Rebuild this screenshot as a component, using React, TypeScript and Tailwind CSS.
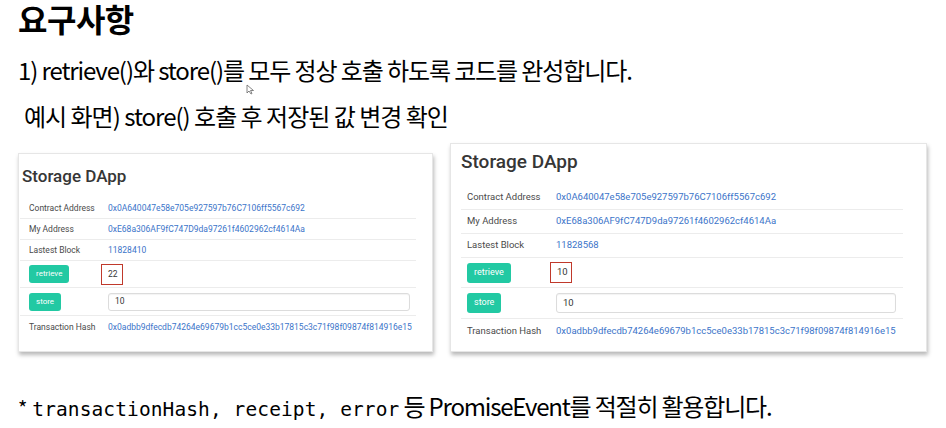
import React from "react";

type CardProps = {
  small?: boolean;
  block: string;
  retrieved: string;
};

const rows = {
  contract: "0x0A640047e58e705e927597b76C7106ff5567c692",
  me: "0xE68a306AF9fC747D9da97261f4602962cf4614Aa",
  tx: "0x0adbb9dfecdb74264e69679b1cc5ce0e33b17815c3c71f98f09874f814916e15",
};

function StorageCard({ small, block, retrieved }: CardProps) {
  // two sizes of the same dapp screenshot, left one is a bit smaller
  const card = small
    ? "w-[415px] h-[199px] mt-[10px] pt-[12px] pb-[15px]"
    : "w-[477px] h-[209px] ml-[17px] pt-[7px] pb-[9px]";
  const title = small
    ? "text-[17px] leading-[20px] pl-[3px] mb-[12px]"
    : "text-[19px] leading-[22px] pl-[10px] mb-[13px]";
  const table = small ? "ml-[1px] mr-[16px] text-[8.5px]" : "ml-[10px] mr-[23px] text-[9.5px]";
  const label = small ? "w-[88px] pl-[9px]" : "w-[95px] pl-[6px]";
  const h1 = small ? "h-[21px]" : "h-[24px]";
  const h4 = small ? "h-[27px]" : "h-[30px]";
  const h5 = small ? "h-[28px]" : "h-[31px]";
  const h6 = small ? "h-[22px]" : "h-[25px]";
  const btn = small ? "h-[18px] px-[7px] text-[8px]" : "h-[20px] px-[7px] text-[9px]";
  const box = small ? "h-[21px] w-[22px] -ml-[7px] pl-[6px]" : "h-[21px] w-[22px] -ml-[6px] pl-[6px]";
  const input = small ? "h-[18px] pl-[6px] mr-[6px]" : "h-[20px] pl-[6px] mr-[7px]";

  return (
    <div
      className={`${card} bg-white border border-[#e6e6e6] shadow-[1px_3px_4px_rgba(0,0,0,0.28)] shrink-0`}
      style={{ fontFamily: "Roboto, 'Liberation Sans', sans-serif" }}
    >
      <div className={`${title} font-medium text-[#363636]`}>Storage DApp</div>
      <div className={`${table} text-[#4a4a4a]`}>
        <div className={`${h1} flex items-center border-b border-[#ececec]`}>
          <div className={label}>Contract Address</div>
          <div className="text-[#3b74c9]">{rows.contract}</div>
        </div>
        <div className={`${h1} flex items-center border-b border-[#ececec]`}>
          <div className={label}>My Address</div>
          <div className="text-[#3b74c9]">{rows.me}</div>
        </div>
        <div className={`${h1} flex items-center border-b border-[#ececec]`}>
          <div className={label}>Lastest Block</div>
          <div className="text-[#3b74c9]">{block}</div>
        </div>
        <div className={`${h4} flex items-center border-b border-[#ececec]`}>
          <div className={`${label} flex`}>
            <span className={`${btn} flex items-center rounded-[3px] bg-[#22c9a3] text-white`}>retrieve</span>
          </div>
          <div className={`${box} flex items-center border border-[#c0392b] text-[#363636]`}>{retrieved}</div>
        </div>
        <div className={`${h5} flex items-center border-b border-[#ececec]`}>
          <div className={`${label} flex`}>
            <span className={`${btn} flex items-center rounded-[3px] bg-[#22c9a3] text-white`}>store</span>
          </div>
          <div className={`${input} flex-1 flex items-center rounded-[3px] border border-[#dcdcdc] text-[#363636] shadow-[inset_0_1px_1px_rgba(0,0,0,0.05)]`}>
            10
          </div>
        </div>
        <div className={`${h6} flex items-center`}>
          <div className={label}>Transaction Hash</div>
          <div className="text-[#3b74c9]">{rows.tx}</div>
        </div>
      </div>
    </div>
  );
}

export default function App() {
  const ko = { fontFamily: "'Noto Sans CJK KR', 'Noto Sans', sans-serif" };
  return (
    <div className="w-[946px] h-[428px] bg-white relative overflow-hidden text-black" style={ko}>
      <div className="pl-[18px]">
        <div className="h-[36px] leading-[36px] text-[32px] font-bold tracking-[-0.5px] whitespace-nowrap">
          요구사항
        </div>
        <div className="mt-[16px] h-[36px] leading-[36px] text-[24px] tracking-[-1.1px] whitespace-nowrap">
          1) retrieve()와 store()를 모두 정상 호출 하도록 코드를 완성합니다.
        </div>
        <div className="mt-[10px] h-[36px] leading-[36px] text-[24px] tracking-[-1px] pl-[6px] whitespace-nowrap">
          예시 화면) store() 호출 후 저장된 값 변경 확인
        </div>
        <div className="mt-[9px] flex items-start">
          <StorageCard small block="11828410" retrieved="22" />
          <StorageCard block="11828568" retrieved="10" />
        </div>
        <div className="mt-[36px] h-[36px] leading-[36px] text-[24px] tracking-[-1.2px] whitespace-nowrap">
          <span className="text-[20px] mr-[2px]">*</span>{" "}
          <span
            className="text-[19.5px] tracking-[0.1px]"
            style={{ fontFamily: "'DejaVu Sans Mono', 'Liberation Mono', monospace" }}
          >
            transactionHash, receipt, error
          </span>{" "}
          등 PromiseEvent를 적절히 활용합니다.
        </div>
      </div>
      <svg className="absolute left-[246px] top-[84px]" width="9" height="11" viewBox="0 0 9 11">
        <path d="M1 1 L1 9 L3 7 L5 10 L6 9.5 L4.5 6.5 L7.5 6.5 Z" fill="#fff" stroke="#666" strokeWidth="0.8" />
      </svg>
    </div>
  );
}
